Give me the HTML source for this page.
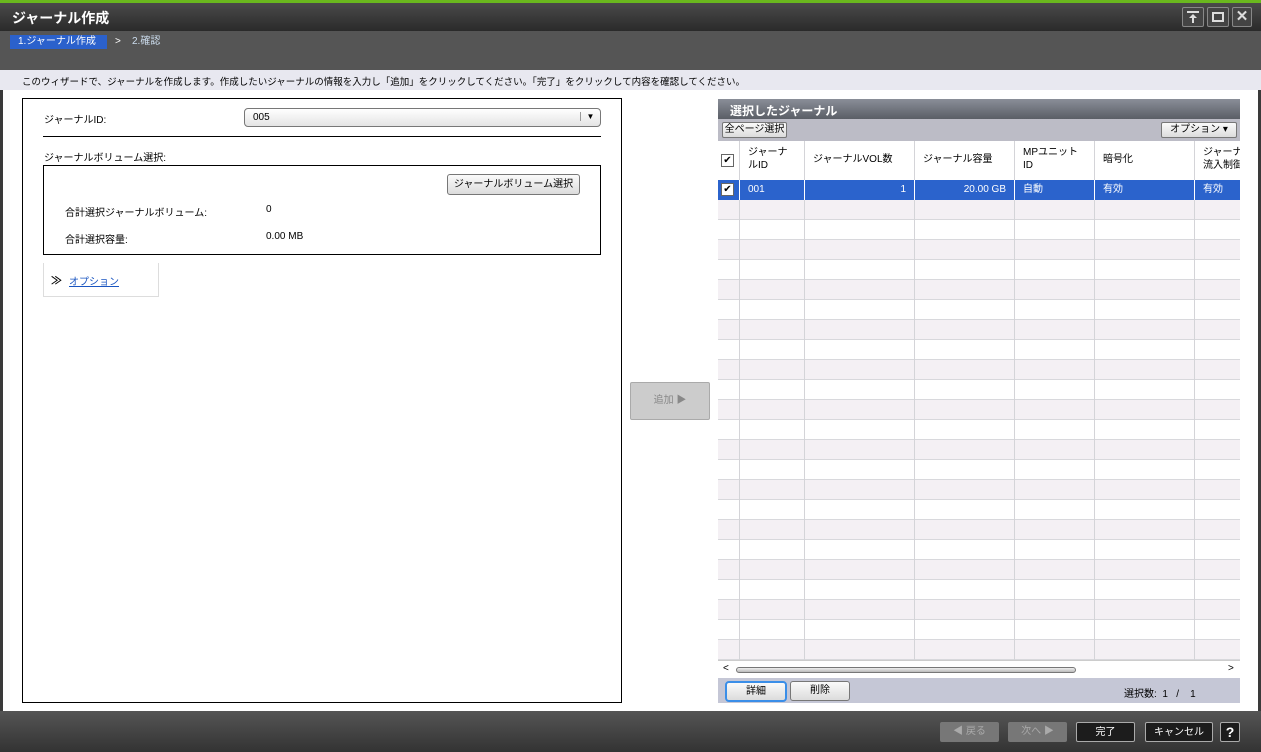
<!DOCTYPE html>
<html><head><meta charset="utf-8"><style>
*{box-sizing:border-box;margin:0;padding:0}
body{width:1261px;height:752px;overflow:hidden;background:#3a3a3a;font-family:"Liberation Sans","Noto Sans CJK JP",sans-serif;font-size:10px;color:#000;position:relative}
.abs{position:absolute;white-space:nowrap}
.btn{position:absolute;border:1px solid #777;border-radius:3px;background:linear-gradient(#fafafa,#dcdcdc);text-align:center;font-size:10px;white-space:nowrap;overflow:hidden}
.dbtn{position:absolute;border:1px solid #aaa;border-radius:2px;background:#1c1c1c;color:#fff;text-align:center;font-size:10px;line-height:19px}
.hc{position:absolute;top:0;height:39px;border-right:1px solid #d4d4d8;padding:5px 8px 0;line-height:13px;overflow:hidden;white-space:normal;font-size:10px}
.rc{position:absolute;top:39px;height:20px;border-right:1px solid #fff;padding:0 8px;line-height:20px;color:#fff;font-size:10px;white-space:nowrap;overflow:hidden}
.vl{position:absolute;top:59px;width:1px;height:460px;background:#d4d4d8}
</style></head><body>
<div class="abs" style="left:0;top:0;width:1261px;height:3px;background:#6ab81e"></div>
<div class="abs" style="left:0;top:3px;width:1261px;height:28px;background:linear-gradient(#4a4a4a,#2a2a2a)"></div>
<div class="abs" style="left:12px;top:8px;color:#fff;font-size:14px;font-weight:bold">ジャーナル作成</div>
<div class="abs" style="left:1182px;top:7px;width:22px;height:20px;border:1px solid #888;border-radius:2px;background:#444"><div style="position:absolute;left:4px;top:3px;width:12px;height:2px;background:#ddd"></div><div style="position:absolute;left:9px;top:7px;width:2px;height:8px;background:#ddd"></div><div style="position:absolute;left:6px;top:6px;width:0;height:0;border:4px solid transparent;border-bottom:4px solid #ddd;border-top:none"></div></div>
<div class="abs" style="left:1207px;top:7px;width:22px;height:20px;border:1px solid #888;border-radius:2px;background:#444"><div style="margin:4px 4px;width:12px;height:10px;border:2px solid #ddd"></div></div>
<div class="abs" style="left:1232px;top:7px;width:20px;height:20px;border:1px solid #888;border-radius:2px;background:#444;color:#ddd;text-align:center;font-size:15px;line-height:18px;font-weight:bold">✕</div>
<div class="abs" style="left:0;top:31px;width:1261px;height:39px;background:#555"></div>
<div class="abs" style="left:10px;top:35px;width:97px;height:14px;background:#2b61cc;color:#fff;padding-left:8px;line-height:14px">1.ジャーナル作成</div>
<div class="abs" style="left:115px;top:35px;color:#fff;line-height:14px">&gt;</div>
<div class="abs" style="left:132px;top:35px;color:#cde;line-height:14px">2.確認</div>
<div class="abs" style="left:0;top:70px;width:1261px;height:20px;background:#e8e8f0;padding:4px 0 0 22px;font-size:9.5px">このウィザードで、ジャーナルを作成します。作成したいジャーナルの情報を入力し「追加」をクリックしてください。「完了」をクリックして内容を確認してください。</div>
<div class="abs" style="left:3px;top:90px;width:1255px;height:621px;background:#fff"></div>
<!-- left panel -->
<div class="abs" style="left:22px;top:98px;width:600px;height:605px;border:1px solid #000"></div>
<div class="abs" style="left:44px;top:111px">ジャーナルID:</div>
<div class="abs" style="left:244px;top:108px;width:357px;height:19px;border:1px solid #777;border-radius:4px;background:linear-gradient(#fff,#e4e4e4);padding:3px 8px">005<span style="position:absolute;right:0;top:3px;width:20px;border-left:1px solid #999;text-align:center;font-size:8px">▼</span></div>
<div class="abs" style="left:43px;top:136px;width:558px;height:1px;background:#000"></div>
<div class="abs" style="left:44px;top:149px">ジャーナルボリューム選択:</div>
<div class="abs" style="left:43px;top:165px;width:558px;height:90px;border:1px solid #000"></div>
<div class="btn" style="left:447px;top:174px;width:133px;height:21px;line-height:19px">ジャーナルボリューム選択</div>
<div class="abs" style="left:65px;top:204px">合計選択ジャーナルボリューム:</div>
<div class="abs" style="left:266px;top:204px">0</div>
<div class="abs" style="left:65px;top:231px">合計選択容量:</div>
<div class="abs" style="left:266px;top:231px">0.00 MB</div>
<div class="abs" style="left:43px;top:263px;width:116px;height:34px;border:1px solid #ddd;border-top:none"></div>
<div class="abs" style="left:51px;top:272px;font-size:11px;font-weight:bold">≫</div>
<div class="abs" style="left:69px;top:273px;color:#1a55c0;text-decoration:underline">オプション</div>
<!-- add button -->
<div class="abs" style="left:630px;top:382px;width:80px;height:38px;border:1px solid #aaa;border-radius:2px;background:#ccc;color:#888;text-align:center;line-height:36px">追加 ▶</div>
<!-- right panel -->
<div class="abs" style="left:718px;top:99px;width:522px;height:20px;background:linear-gradient(#8a8e98,#5a5e66);color:#fff;font-weight:bold;font-size:12px;padding:3px 12px">選択したジャーナル</div>
<div class="abs" style="left:718px;top:119px;width:522px;height:22px;background:#bcbcc6"></div>
<div class="btn" style="left:722px;top:122px;width:65px;height:16px;line-height:14px;border-radius:2px">全ページ選択</div>
<div class="btn" style="left:1161px;top:122px;width:76px;height:16px;line-height:14px;border-radius:2px">オプション ▾</div>
<div class="abs" style="left:718px;top:141px;width:522px;height:519px;overflow:hidden;background:#fff">
<div class="abs" style="left:0;top:59px;width:522px;height:460px;background:repeating-linear-gradient(#f4f0f4 0 19px,#d8d8dc 19px 20px,#fff 20px 39px,#d8d8dc 39px 40px)"></div>
<div class="vl" style="left:21px"></div><div class="vl" style="left:86px"></div><div class="vl" style="left:196px"></div><div class="vl" style="left:296px"></div><div class="vl" style="left:376px"></div><div class="vl" style="left:476px"></div>
<div class="hc" style="left:0;width:22px;padding:13px 3px 0"><div style="width:13px;height:13px;border:1px solid #666;font-size:10px;line-height:11px;text-align:center">✔</div></div>
<div class="hc" style="left:22px;width:65px">ジャーナ<br>ルID</div>
<div class="hc" style="left:87px;width:110px;padding-top:12px">ジャーナルVOL数</div>
<div class="hc" style="left:197px;width:100px;padding-top:12px">ジャーナル容量</div>
<div class="hc" style="left:297px;width:80px">MPユニット<br>ID</div>
<div class="hc" style="left:377px;width:100px;padding-top:12px">暗号化</div>
<div class="hc" style="left:477px;width:60px">ジャーナ<br>流入制御</div>
<div class="abs" style="left:0;top:39px;width:522px;height:20px;background:#2b63cc"></div>
<div class="rc" style="left:0;width:22px;padding:3px 3px"><div style="width:13px;height:13px;border:1px solid #666;background:#fff;color:#000;font-size:10px;line-height:11px;text-align:center">✔</div></div>
<div class="rc" style="left:22px;width:65px">001</div>
<div class="rc" style="left:87px;width:110px;text-align:right">1</div>
<div class="rc" style="left:197px;width:100px;text-align:right">20.00 GB</div>
<div class="rc" style="left:297px;width:80px">自動</div>
<div class="rc" style="left:377px;width:100px">有効</div>
<div class="rc" style="left:477px;width:60px">有効</div>
</div>
<div class="abs" style="left:718px;top:660px;width:522px;height:18px;background:#fff;border-top:1px solid #ccc"></div>
<div class="abs" style="left:723px;top:663px;font-size:10px">&lt;</div>
<div class="abs" style="left:1228px;top:663px;font-size:10px">&gt;</div>
<div class="abs" style="left:736px;top:667px;width:340px;height:6px;border:1px solid #777;border-radius:3px;background:linear-gradient(#eee,#bbb)"></div>
<div class="abs" style="left:718px;top:678px;width:522px;height:25px;background:#c5c7d6"></div>
<div class="btn" style="left:725px;top:681px;width:62px;height:21px;line-height:17px;border:2px solid #3a8ee8;border-radius:4px">詳細</div>
<div class="btn" style="left:790px;top:681px;width:60px;height:20px;line-height:18px">削除</div>
<div class="abs" style="left:1124px;top:685px">選択数:&nbsp; 1 &nbsp; / &nbsp;&nbsp; 1</div>
<!-- footer -->
<div class="abs" style="left:0;top:711px;width:1261px;height:41px;background:linear-gradient(#555,#333)"></div>
<div class="abs" style="left:940px;top:722px;width:59px;height:20px;background:#777;color:#aaa;text-align:center;line-height:20px;border-radius:2px">◀ 戻る</div>
<div class="abs" style="left:1008px;top:722px;width:59px;height:20px;background:#777;color:#aaa;text-align:center;line-height:20px;border-radius:2px">次へ ▶</div>
<div class="dbtn" style="left:1076px;top:722px;width:59px;height:20px">完了</div>
<div class="dbtn" style="left:1145px;top:722px;width:68px;height:20px">キャンセル</div>
<div class="dbtn" style="left:1220px;top:722px;width:20px;height:20px;font-weight:bold;font-size:14px">?</div>
</body></html>
